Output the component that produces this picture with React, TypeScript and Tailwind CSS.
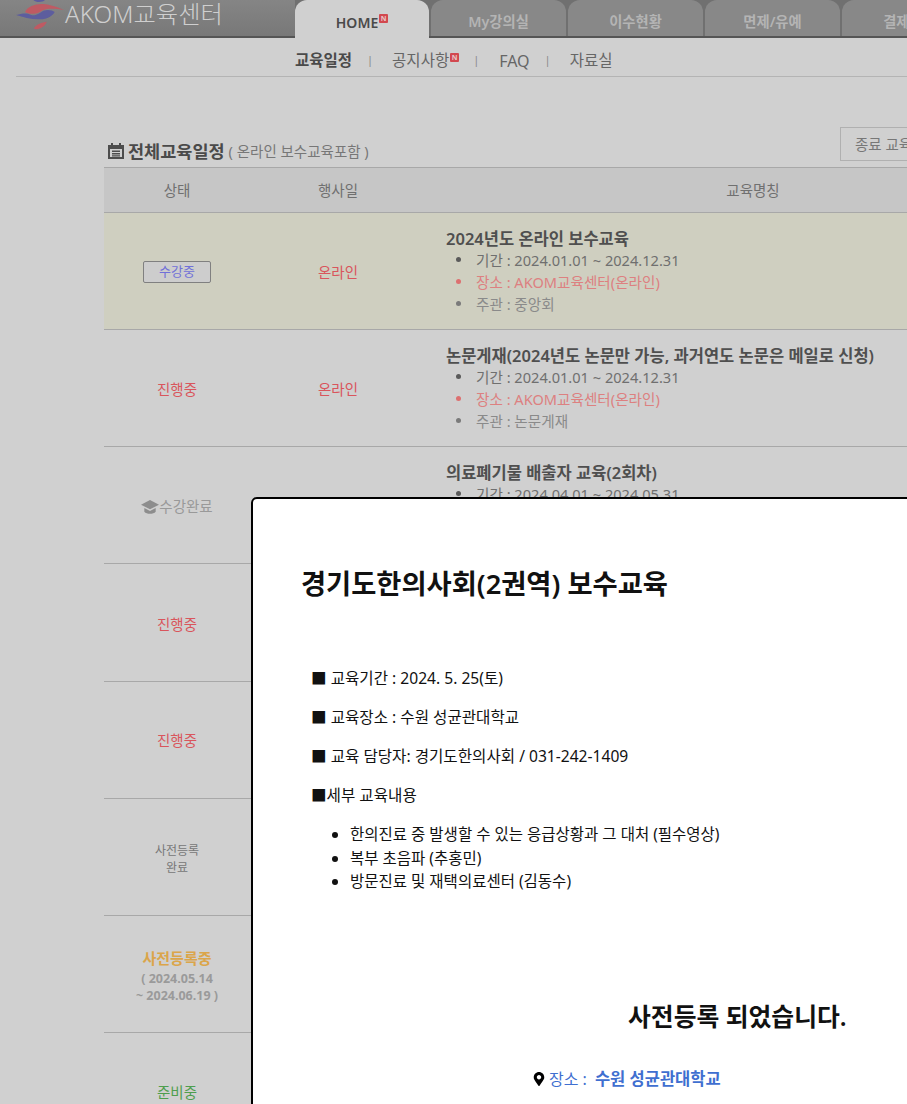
import { FaMapMarkerAlt } from "react-icons/fa";

const font = { fontFamily: '"Noto Sans", "Noto Sans CJK KR", sans-serif' };

const tabs = ["My강의실", "이수현황", "면제/유예", "결제내역"];

function NBadge({ className }: { className: string }) {
  return (
    <span
      className={
        "inline-flex items-center justify-center rounded-[1px] bg-[#d2484f] text-[7px] leading-none font-bold text-[#e8c8c8] " +
        className
      }
    >
      N
    </span>
  );
}

function Logo() {
  return (
    <svg width="50" height="32" viewBox="15 0 150 96" className="shrink-0 self-start">
      <path d="M70 0 H105 C100 6 80 10 70 0 Z" fill="#5d5d9e" />
      <path d="M45 36 C52 18 80 10 100 12 C120 14 145 22 162 30 C140 26 115 24 100 30 C92 34 86 40 72 41 C62 42 50 40 45 36 Z" fill="#bf5a63" />
      <path d="M18 45 C35 40 50 38 62 44 C78 50 88 38 100 32 C112 28 128 30 134 36 C130 46 112 58 90 58 C65 59 40 52 18 45 Z" fill="#5d5d9e" />
      <path d="M72 85 C76 76 90 68 110 65 C108 74 96 84 84 87 C78 88 73 88 72 85 Z" fill="#bf5a63" />
    </svg>
  );
}

function Cap() {
  return (
    <svg width="18" height="16" viewBox="0 0 19 16" className="shrink-0">
      <path d="M9.5 0.5 L19 5.5 L9.5 10.5 L0 5.5 Z" fill="#8d8d8d" />
      <path d="M3.5 9 L9.5 12.2 L15.5 9 V13 C13 16 6 16 3.5 13 Z" fill="#8d8d8d" />
    </svg>
  );
}

function MetaLine({ text, textColor, dotColor }: { text: string; textColor: string; dotColor: string }) {
  return (
    <li className={"flex items-center whitespace-nowrap " + textColor}>
      <span className={"mr-[15px] h-[5px] w-[5px] shrink-0 rounded-full " + dotColor}></span>
      {text}
    </li>
  );
}

function Meta({ period, place, host }: { period: string; place: string; host: string }) {
  return (
    <ul className="mt-[-1px] pl-[10px] text-[14.6px] leading-[22px]">
      <MetaLine text={"기간 : " + period} textColor="text-[#6f6f6f]" dotColor="bg-[#5a5a5a]" />
      <MetaLine text={"장소 : " + place} textColor="text-[#dd8080]" dotColor="bg-[#dd7070]" />
      <MetaLine text={"주관 : " + host} textColor="text-[#8a8a8a]" dotColor="bg-[#7a7a7a]" />
    </ul>
  );
}

function Row({
  status,
  date,
  title,
  meta,
  highlight,
  tall,
}: {
  status: React.ReactNode;
  date?: string;
  title?: string;
  meta?: { period: string; place: string; host: string };
  highlight?: boolean;
  tall?: boolean;
}) {
  return (
    <div
      className={
        "grid grid-cols-[146px_176px_654px] items-center border-b border-[#a8a8a8] " +
        (tall ? "h-[118px] " : "h-[117px] ") +
        (highlight ? "bg-[#cfcfc0]" : "")
      }
    >
      <div className="flex flex-col items-center pt-[4px] text-center">{status}</div>
      <div className="pt-[4px] text-center text-[14.5px] text-[#d9555c]">{date}</div>
      <div className="pl-[20px]">
        {title && <div className="text-[16.5px] leading-[22px] font-semibold text-[#4f4f4f]">{title}</div>}
        {meta && <Meta {...meta} />}
      </div>
    </div>
  );
}

export default function App() {
  return (
    <div className="relative h-[1104px] w-[907px] overflow-hidden bg-[#d0d0d0]" style={font}>
      <header className="flex h-[38px] items-end border-b-2 border-[#555] bg-gradient-to-b from-[#858585] to-[#787878]">
        <div className="flex h-full w-[295px] shrink-0 items-center pb-[7px] pl-[15px]">
          <Logo />
          <span className="text-[24.3px] leading-none font-light whitespace-nowrap text-[#cfcfcf]">AKOM교육센터</span>
        </div>
        <div className="flex h-[36px] shrink-0 items-start gap-[2px] bg-[#707070]">
          <div className="flex h-[38px] w-[134px] items-center justify-center rounded-t-[12px] bg-[#d0d0d0] pt-[6px] text-[14px] font-semibold text-[#4a4a4a]">
            HOME
            <NBadge className="mb-[7px] ml-[1px] h-[9px] w-[9px]" />
          </div>
          {tabs.map((tab) => (
            <div
              key={tab}
              className="flex h-[36px] w-[135px] shrink-0 items-center justify-center rounded-t-[12px] bg-[#888888] pt-[8px] text-[14.3px] font-semibold text-[#b4b4b4]"
            >
              {tab}
            </div>
          ))}
        </div>
      </header>

      <nav className="ml-[16px] flex h-[39px] items-center border-b border-[#b4b4b4] pt-[7px] pl-[279px] text-[15.5px] text-[#666]">
        <span className="font-bold text-[#4a4a4a]">교육일정</span>
        <span className="mr-[19px] ml-[15px] text-[11px] text-[#888]">|</span>
        <span>공지사항</span>
        <NBadge className="mb-[6px] ml-[1px] h-[9px] w-[9px]" />
        <span className="mr-[20px] ml-[14px] text-[11px] text-[#888]">|</span>
        <span className="text-[16px]">FAQ</span>
        <span className="mr-[19px] ml-[15px] text-[11px] text-[#888]">|</span>
        <span>자료실</span>
      </nav>

      <main className="ml-[104px] w-[976px]">
        <div className="flex h-[90px] items-end justify-between">
          <div className="flex items-center pb-[3px] pl-[3px]">
            <svg width="18" height="18" viewBox="0 0 18 18" className="mr-[3px]">
              <path
                d="M1 3h3V1h2v2h6V1h2v2h3v14H1z M3 7v8h12V7z M5 8.5h8V10H5z M5 11h8v1.5H5z M5 13.2h8v1.3H5z"
                fill="#4d4d4d"
                fillRule="evenodd"
              />
            </svg>
            <span className="text-[17.5px] font-bold text-[#4a4a4a]">전체교육일정</span>
            <span className="ml-[4px] pt-[2px] text-[14.5px] text-[#777]">( 온라인 보수교육포함 )</span>
          </div>
          <div className="mb-[6px] flex h-[34px] w-[240px] items-center border border-[#b0b0b0] pt-[1px] pl-[14px] text-[14.5px] text-[#777]">
            종료 교육 보기
          </div>
        </div>

        <div className="grid h-[46px] grid-cols-[146px_176px_654px] items-center border-y border-[#a8a8a8] bg-[#c6c6c6] pt-[2px] text-center text-[14.5px] text-[#707070]">
          <span>상태</span>
          <span>행사일</span>
          <span>교육명칭</span>
        </div>

        <Row
          highlight
          status={
            <span className="mb-[3px] flex h-[22px] w-[68px] items-center justify-center rounded-[2px] border border-[#808080] bg-[#cdcdcd] text-[13px] text-[#7070d8]">
              수강중
            </span>
          }
          date="온라인"
          title="2024년도 온라인 보수교육"
          meta={{ period: "2024.01.01 ~ 2024.12.31", place: "AKOM교육센터(온라인)", host: "중앙회" }}
        />
        <Row
          status={<span className="text-[14.5px] text-[#d9555c]">진행중</span>}
          date="온라인"
          title="논문게재(2024년도 논문만 가능, 과거연도 논문은 메일로 신청)"
          meta={{ period: "2024.01.01 ~ 2024.12.31", place: "AKOM교육센터(온라인)", host: "논문게재" }}
        />
        <Row
          status={
            <span className="flex items-center text-[14.5px] text-[#999]">
              <Cap />
              수강완료
            </span>
          }
          title="의료폐기물 배출자 교육(2회차)"
          meta={{ period: "2024.04.01 ~ 2024.05.31", place: "AKOM교육센터(온라인)", host: "중앙회" }}
        />
        <Row tall status={<span className="text-[14.5px] text-[#d9555c]">진행중</span>} />
        <Row status={<span className="mb-[2px] text-[14.5px] text-[#d9555c]">진행중</span>} />
        <Row
          status={
            <span className="text-[12px] leading-[17px] text-[#777]">
              사전등록
              <br />
              완료
            </span>
          }
        />
        <Row
          status={
            <>
              <span className="text-[15px] leading-[20px] font-bold text-[#dba54a]">사전등록중</span>
              <span className="mt-[2px] text-[12.5px] leading-[17px] font-bold text-[#9a9a9a]">
                ( 2024.05.14
                <br />~ 2024.06.19 )
              </span>
            </>
          }
        />
        <Row status={<span className="text-[14.5px] text-[#4e9e4e]">준비중</span>} />
      </main>

      <section className="absolute top-[497px] left-[251px] h-[800px] w-[970px] rounded-tl-[6px] border-2 border-black bg-white text-[#111]">
        <h2 className="pt-[67px] pl-[48px] text-[27.3px] leading-[36px] font-semibold">경기도한의사회(2권역) 보수교육</h2>
        <div className="mt-[65px] pl-[58px] text-[15.6px] leading-[22px]">
          <p className="mb-[17px]">■ 교육기간 : 2024. 5. 25(토)</p>
          <p className="mb-[17px]">■ 교육장소 : 수원 성균관대학교</p>
          <p className="mb-[17px]">■ 교육 담당자: 경기도한의사회 / 031-242-1409</p>
          <p className="mb-[17px]">■세부 교육내용</p>
          <ul className="list-disc pl-[39px] text-[15.5px] leading-[23.5px]">
            <li>한의진료 중 발생할 수 있는 응급상황과 그 대처 (필수영상)</li>
            <li>복부 초음파 (추홍민)</li>
            <li>방문진료 및 재택의료센터 (김동수)</li>
          </ul>
        </div>
        <p className="mt-[104px] pl-[375px] text-[24.8px] leading-[36px] font-semibold text-[#111]">사전등록 되었습니다.</p>
        <p className="mt-[33px] flex items-center pl-[279px] text-[16px] text-[#3f6fd0]">
          <FaMapMarkerAlt className="mr-[3px] text-[14px] text-black" />
          장소 :<b className="ml-[8px] text-[16.5px] font-bold">수원 성균관대학교</b>
        </p>
      </section>
    </div>
  );
}
